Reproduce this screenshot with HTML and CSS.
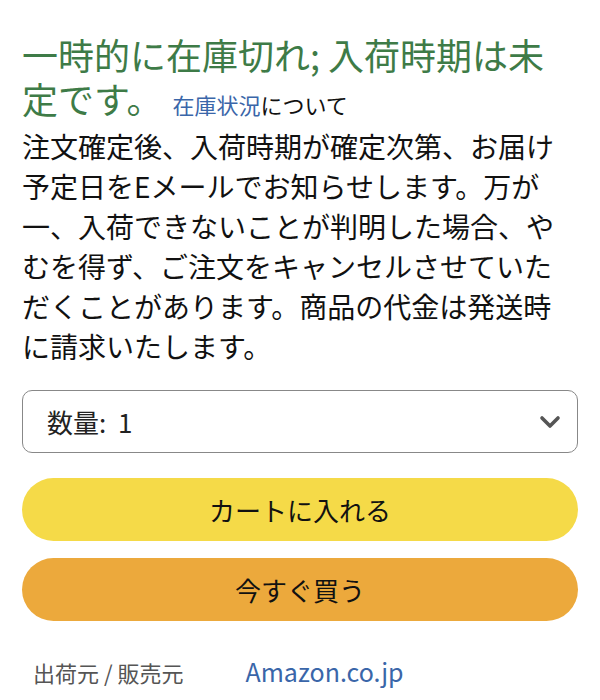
FILE: index.html
```html
<!DOCTYPE html>
<html lang="ja">
<head>
  <meta charset="UTF-8" />
  <meta name="viewport" content="width=device-width, initial-scale=1.0"/>
  <title>在庫状況</title>
  <link rel="stylesheet" href="styles.css">
</head>
<body>

<div class="buybox">
  <h2 class="availability">一時的に在庫切れ; 入荷時期は未定です。 <span class="stock-note"><a href="#">在庫状況</a>について</span></h2>
  <p class="notice">注文確定後、入荷時期が確定次第、お届け予定日をEメールでお知らせします。万が一、入荷できないことが判明した場合、やむを得ず、ご注文をキャンセルさせていただくことがあります。商品の代金は発送時に請求いたします。</p>

  <div class="quantity">
    <span>数量:&nbsp; 1</span>
    <svg class="chevron" width="22" height="14" viewBox="0 0 22 14">
      <path d="M3 3 L11 11 L19 3" fill="none" stroke="#555" stroke-width="3.6" stroke-linecap="round" stroke-linejoin="round"/>
    </svg>
  </div>

  <div class="actions">
    <button class="btn btn-cart">カートに入れる</button>
    <button class="btn btn-buy">今すぐ買う</button>
  </div>

  <div class="seller">
    <span class="seller-label">出荷元 / 販売元</span>
    <a href="#" class="seller-name">Amazon.co.jp</a>
  </div>
</div>

</body>
</html>
```

FILE: styles.css
```css
body {
  font-family: "Noto Sans CJK JP", "Noto Sans", sans-serif;
  margin: 0;
  background: #fff;
  color: #111;
}

.buybox {
  padding: 0 22px;
}

.availability {
  margin: 32px 0 0;
  font-size: 36px;
  font-weight: normal;
  line-height: 44px;
  color: #3e7b47;
}

.stock-note {
  font-size: 22px;
  line-height: 1;
  color: #111;
  margin-left: 2px;
}

.stock-note a {
  color: #3a66a9;
  text-decoration: none;
}

.notice {
  margin: 6px 0 0;
  font-size: 28px;
  line-height: 40px;
}

.quantity {
  margin-top: 24px;
  height: 61px;
  border: 1.5px solid #888;
  border-radius: 10px;
  display: flex;
  align-items: center;
  justify-content: space-between;
  padding: 0 16px 0 24px;
  font-size: 26px;
  color: #222;
}

.actions {
  margin-top: 25px;
  display: flex;
  flex-direction: column;
  gap: 17px;
}

.btn {
  height: 63px;
  border: none;
  border-radius: 32px;
  font-family: inherit;
  font-size: 26px;
  color: #111;
  cursor: pointer;
}

.btn-cart {
  background: #f5da48;
}

.btn-buy {
  background: #eca93c;
}

.seller {
  margin-top: 32px;
  display: flex;
  align-items: baseline;
  gap: 62px;
  padding-left: 11px;
}

.seller-label {
  font-size: 22px;
  color: #555;
}

.seller-name {
  font-size: 25px;
  color: #3a66a9;
  text-decoration: none;
}
```
